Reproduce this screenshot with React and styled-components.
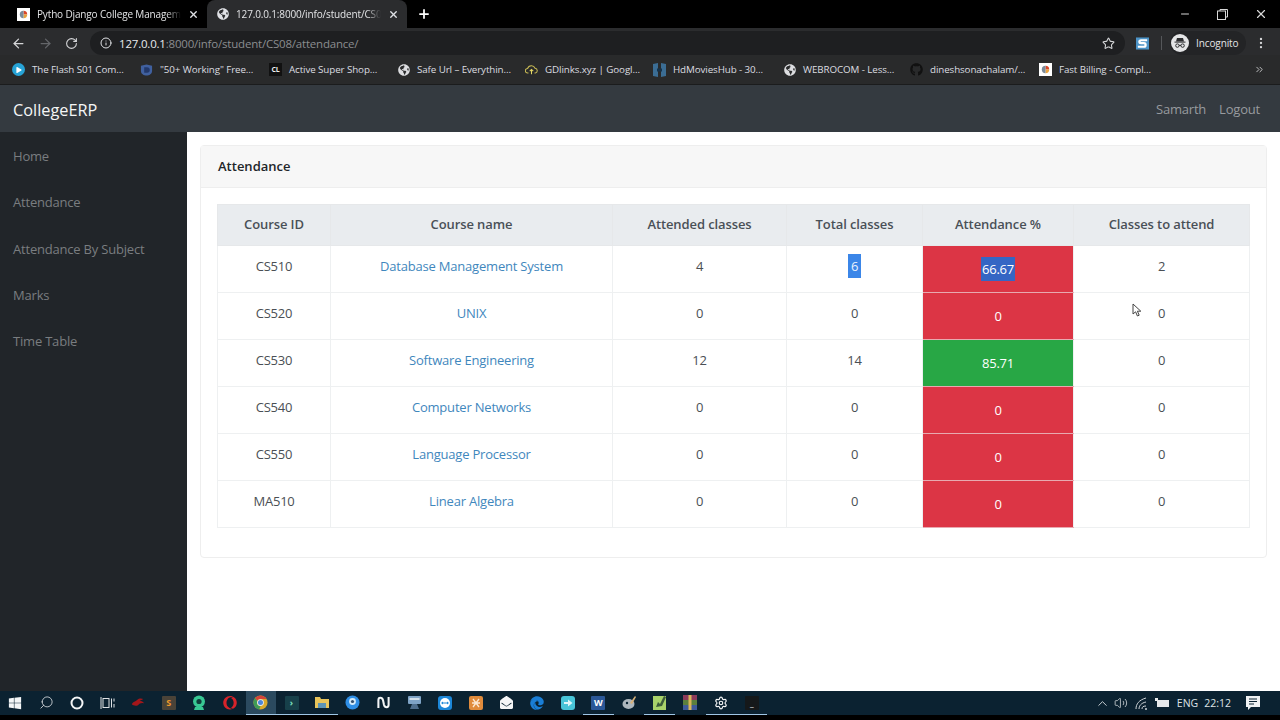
import styled, { createGlobalStyle } from "styled-components";
import {
  ArrowLeft,
  ArrowRight,
  ChevronUp,
  ChevronsRight,
  Info,
  Minus,
  MoreVertical,
  Plus,
  RotateCw,
  Search,
  Settings,
  Star,
  Volume2,
  X,
} from "lucide-react";
import {
  FaEdge,
  FaEnvelopeOpen,
  FaGithub,
  FaGlobeAmericas,
  FaOpera,
  FaPlay,
  FaWindows,
} from "react-icons/fa";

const GlobalStyle = createGlobalStyle`
  html, body {
    margin: 0;
    padding: 0;
    height: 720px;
    overflow: hidden;
    background: #000;
  }
  * {
    box-sizing: border-box;
  }
`;

const UI_FONT = `"Open Sans", "Noto Sans", sans-serif`;

const Page = styled.div`
  width: 1280px;
  height: 720px;
  display: flex;
  flex-direction: column;
  font-family: ${UI_FONT};
  background: #000;
`;

/* browser chrome */
const TabStrip = styled.div`
  height: 28px;
  flex: none;
  display: flex;
  align-items: flex-end;
  background: #000;
  color: #dfe1e5;
`;

const Tab = styled.div`
  width: ${(props) => props.$width}px;
  height: 28px;
  display: flex;
  align-items: center;
  gap: 7px;
  padding: 0 8px 0 ${(props) => props.$pad}px;
  background: ${(props) => (props.$active ? "#2b2c2e" : "transparent")};
  border-radius: 8px 8px 0 0;
`;

const TabTitle = styled.span`
  flex: 1;
  min-width: 0;
  font-size: 10px;
  letter-spacing: -0.15px;
  white-space: nowrap;
  color: #e3e4e6;
  -webkit-mask-image: linear-gradient(to right, #000 90%, transparent 100%);
  mask-image: linear-gradient(to right, #000 90%, transparent 100%);
`;

const NewTab = styled.div`
  width: 20px;
  height: 28px;
  margin-left: 7px;
  display: flex;
  align-items: center;
  justify-content: center;
  color: #fff;
`;

const WindowButtons = styled.div`
  margin-left: auto;
  height: 28px;
  display: flex;
  align-items: center;
  gap: 26px;
  padding-right: 12px;
  color: #d8d8d8;
`;

const Toolbar = styled.div`
  height: 27px;
  flex: none;
  display: flex;
  align-items: center;
  padding: 3px 0 0 11px;
  background: #2b2c2e;
  color: #d5d6d8;
`;

const NavIcons = styled.div`
  width: 79px;
  display: flex;
  align-items: center;
  gap: 12px;
`;

const Omnibox = styled.div`
  width: 1035px;
  height: 24px;
  display: flex;
  align-items: center;
  gap: 7px;
  padding: 0 10px;
  border-radius: 12px;
  background: #1e1f21;
`;

const Url = styled.span`
  flex: 1;
  font-size: 11.5px;
  letter-spacing: -0.2px;
  color: #8b8d90;
`;

const UrlHost = styled.span`
  color: #e8eaed;
`;

const ExtensionLogo = styled.svg`
  margin-left: 11px;
  flex: none;
`;

const Divider = styled.span`
  width: 1px;
  height: 14px;
  margin: 0 8px 0 12px;
  background: #55575a;
`;

const IncognitoChip = styled.div`
  width: 76px;
  height: 24px;
  display: flex;
  align-items: center;
  gap: 7px;
  padding-left: 1px;
  margin-right: 8px;
  font-size: 10px;
  letter-spacing: -0.1px;
  color: #e3e4e6;
  background: #232426;
  border-radius: 12px;
`;

const IncognitoBadge = styled.span`
  width: 18px;
  height: 18px;
  border-radius: 50%;
  background: #e4e5e6;
  display: flex;
  align-items: center;
  justify-content: center;
`;

const BookmarksBar = styled.div`
  height: 30px;
  flex: none;
  display: flex;
  align-items: center;
  padding-left: 12px;
  background: #292a2b;
  border-bottom: 1px solid #1b1c1d;
  color: #dcdde0;
`;

const Bookmark = styled.div`
  width: ${(props) => props.$width}px;
  display: flex;
  align-items: center;
  gap: 7px;
  font-size: 9.8px;
  letter-spacing: -0.1px;
  white-space: nowrap;
`;

const BookmarkIcon = styled.span`
  width: 13px;
  height: 13px;
  flex: none;
  display: flex;
  align-items: center;
  justify-content: center;
  font-size: 7px;
  font-weight: 700;
  border-radius: ${(props) => props.$radius || 0}px;
  background: ${(props) => props.$bg || "transparent"};
  color: ${(props) => props.$color || "#dcdde0"};
`;

const MoreBookmarks = styled.span`
  margin-left: auto;
  margin-right: 15px;
  display: flex;
  color: #c8c9cb;
`;

/* app */
const Navbar = styled.header`
  height: 47px;
  flex: none;
  display: flex;
  align-items: center;
  justify-content: space-between;
  padding: 0 20px 0 13px;
  background: #343a40;
`;

const Brand = styled.a`
  margin-top: 2px;
  font-size: 16.3px;
  color: #f5f6f6;
`;

const NavLinks = styled.nav`
  display: flex;
  gap: 13px;
`;

const NavLink = styled.a`
  font-size: 13px;
  letter-spacing: -0.2px;
  color: #989b9f;
`;

const Body = styled.div`
  flex: 1;
  min-height: 0;
  display: flex;
  background: #fff;
`;

const Sidebar = styled.aside`
  width: 187px;
  flex: none;
  display: flex;
  flex-direction: column;
  padding-top: 1px;
  background: #212529;
`;

const SideLink = styled.a`
  height: 46.3px;
  display: flex;
  align-items: center;
  padding-left: 13px;
  font-size: 13px;
  letter-spacing: -0.2px;
  color: #7a7d80;
`;

const Main = styled.main`
  flex: 1;
  min-width: 0;
  padding: 13px 13px 0;
`;

const Card = styled.section`
  height: 413px;
  border: 1px solid #eeeeee;
  border-radius: 4px;
`;

const CardHeader = styled.div`
  height: 42px;
  display: flex;
  align-items: center;
  padding: 0 0 1px 17px;
  font-size: 13px;
  font-weight: 600;
  color: #212529;
  background: #f7f7f7;
  border-bottom: 1px solid #eeeeee;
`;

const CardBody = styled.div`
  padding: 16px 16px 0;
`;

const Table = styled.table`
  width: 1032px;
  table-layout: fixed;
  border-collapse: collapse;
  font-size: 13px;
  letter-spacing: -0.2px;
  color: #4a4f54;
`;

const HeadCell = styled.th`
  height: 41px;
  padding: 0 0 2px;
  font-size: 13px;
  font-weight: 600;
  letter-spacing: -0.1px;
  text-align: center;
  color: #495057;
  background: #e9ecef;
  border: 1px solid #e6e8ea;
`;

const Cell = styled.td`
  height: 47px;
  padding: 0 0 6px;
  text-align: center;
  border: 1px solid #eef0f1;
  border-top-color: #e3e5e7;
`;

const PercentCell = styled.td`
  height: 47px;
  padding: 0;
  text-align: center;
  color: #fff;
  background: ${(props) => (props.$good ? "#28a745" : "#dc3545")};
  border-bottom: 1px solid #e8a9b0;
`;

const CourseLink = styled.a`
  color: #3f87bd;
`;

const Selected = styled.span`
  padding: ${(props) => (props.$dark ? "3px 1px" : "3px 3px")};
  color: ${(props) => (props.$dark ? "#fff" : "#eaf2fd")};
  background: ${(props) => (props.$dark ? "#3566c4" : "#3b86e8")};
`;

const Pointer = styled.svg`
  position: absolute;
  left: 1132px;
  top: 303px;
`;

/* windows taskbar */
const Taskbar = styled.footer`
  height: 24px;
  flex: none;
  display: flex;
  align-items: center;
  background: #0b2231;
  color: #e6e9eb;
`;

const TaskItem = styled.div`
  width: 30.7px;
  height: 24px;
  flex: none;
  display: flex;
  align-items: center;
  justify-content: center;
  background: ${(props) => (props.$focused ? "#2b4a5f" : "transparent")};
  border-bottom: 1px solid
    ${(props) => (props.$running ? "#9fc6e6" : "transparent")};
`;

const Tile = styled.span`
  width: 14px;
  height: 14px;
  display: flex;
  align-items: center;
  justify-content: center;
  font-size: 9px;
  font-weight: 700;
  color: ${(props) => props.$color || "#fff"};
  background: ${(props) => props.$bg || "transparent"};
  border-radius: ${(props) => props.$radius || 1}px;
`;

const SearchGlass = styled(Search)`
  transform: scaleX(-1);
`;

const Tray = styled.div`
  margin-left: auto;
  display: flex;
  align-items: center;
  padding-right: 20px;
  font-size: 10.5px;
  color: #dfe3e6;
`;

const TrayItem = styled.span`
  display: flex;
  align-items: center;
  margin-left: ${(props) => props.$gap}px;
`;

const Bottom = styled.div`
  height: 5px;
  flex: none;
  background: #000;
`;

const courses = [
  { id: "CS510", name: "Database Management System", attended: 4, total: 6, pct: "66.67", toAttend: 2 },
  { id: "CS520", name: "UNIX", attended: 0, total: 0, pct: "0", toAttend: 0 },
  { id: "CS530", name: "Software Engineering", attended: 12, total: 14, pct: "85.71", toAttend: 0, good: true },
  { id: "CS540", name: "Computer Networks", attended: 0, total: 0, pct: "0", toAttend: 0 },
  { id: "CS550", name: "Language Processor", attended: 0, total: 0, pct: "0", toAttend: 0 },
  { id: "MA510", name: "Linear Algebra", attended: 0, total: 0, pct: "0", toAttend: 0 },
];

const columns = [
  { title: "Course ID", width: 113 },
  { title: "Course name", width: 282 },
  { title: "Attended classes", width: 174 },
  { title: "Total classes", width: 136 },
  { title: "Attendance %", width: 151 },
  { title: "Classes to attend", width: 176 },
];

const sideLinks = ["Home", "Attendance", "Attendance By Subject", "Marks", "Time Table"];

function PieFavicon({ size = 13 }) {
  return (
    <svg width={size} height={size} viewBox="0 0 14 14">
      <rect width="14" height="14" fill="#fff" />
      <path d="M7 3a4 4 0 0 1 4 4H7z" fill="#d9472b" />
      <path d="M11 7a4 4 0 0 1-4 4V7z" fill="#e8a33d" />
      <path d="M7 11a4 4 0 0 1 0-8v4z" fill="#7b8a99" />
    </svg>
  );
}

function IncognitoIcon() {
  return (
    <svg width="14" height="14" viewBox="0 0 14 14" fill="#2b2c2e">
      <path d="M4 2h6l1 3.4H3z" />
      <rect x="1.5" y="5.6" width="11" height="1" />
      <circle cx="4.4" cy="9.6" r="1.7" fill="none" stroke="#2b2c2e" />
      <circle cx="9.6" cy="9.6" r="1.7" fill="none" stroke="#2b2c2e" />
      <path d="M6 9.4h2" stroke="#2b2c2e" />
    </svg>
  );
}

function CloudIcon() {
  return (
    <svg width="15" height="13" viewBox="0 0 15 13" fill="none" stroke="#c9bb55" strokeWidth="1.2">
      <path d="M4 10.5H3A2.6 2.6 0 0 1 3 5.3 4.6 4.6 0 0 1 11.6 5 2.8 2.8 0 0 1 12 10.5h-1" />
      <path d="M7.5 12V6.5M5.5 8.5l2-2 2 2" stroke="#e4d765" />
    </svg>
  );
}

function ShieldIcon() {
  return (
    <svg width="14" height="14" viewBox="0 0 14 14">
      <path d="M1 2.5 7 1l6 1.5V8c0 3-3 5-6 5s-6-2-6-5z" fill="#40609f" />
      <path d="M4.5 4h3a2.8 2.8 0 0 1 0 6h-3z" fill="#22386a" />
    </svg>
  );
}

function HdIcon() {
  return (
    <svg width="13" height="14" viewBox="0 0 13 14">
      <path d="M0 1l5-1v14l-5-1zM8 0l5 1v12l-5 1z" fill="#3b6d94" />
      <rect x="4" y="5.5" width="5" height="3" fill="#16324a" />
    </svg>
  );
}

function TaskView() {
  return (
    <svg width="15" height="14" viewBox="0 0 15 14" fill="none" stroke="#dfe3e6">
      <rect x="3" y="2.5" width="6" height="9" />
      <path d="M1 1v12M11.5 2.5v9M14 2.5v3M14 8v3.5" />
    </svg>
  );
}

function Folder() {
  return (
    <svg width="14" height="13" viewBox="0 0 14 13">
      <path d="M0 1h5l1 2h8v9H0z" fill="#e8c45a" />
      <rect x="3" y="7" width="8" height="5" fill="#5c93b5" />
    </svg>
  );
}

function ChromeIcon() {
  return (
    <svg width="15" height="15" viewBox="0 0 16 16">
      <circle cx="8" cy="8" r="7.5" fill="#d9a92b" />
      <path d="M8 .5a7.5 7.5 0 0 1 6.5 3.75H8A3.75 3.75 0 0 0 4.6 6.4L2.2 3.3A7.5 7.5 0 0 1 8 .5z" fill="#d5443a" />
      <path d="M2.2 3.3 4.6 6.4A3.75 3.75 0 0 0 8 11.75L6.6 15.4A7.5 7.5 0 0 1 2.2 3.3z" fill="#3f9b56" />
      <circle cx="8" cy="8" r="3.6" fill="#e9edf0" />
      <circle cx="8" cy="8" r="2.7" fill="#4c86d8" />
    </svg>
  );
}

function CarLogo() {
  return (
    <svg width="14" height="11" viewBox="0 0 16 12">
      <path d="M1 8c1-3 4-3 6-5 2-2 5-2 7-1-1 1-3 1-4 2 2 0 4 1 5 3-3-1-5 0-7 2-2 1-5 1-7-1z" fill="#a3161a" />
    </svg>
  );
}

function WhatsLogo() {
  return (
    <svg width="14" height="15" viewBox="0 0 14 15">
      <circle cx="7" cy="6.5" r="6" fill="#38c793" />
      <circle cx="7" cy="6.5" r="2.6" fill="#0f3d3a" />
      <path d="M3 12h8l1 3H2z" fill="#38c793" />
    </svg>
  );
}

function OrbLogo() {
  return (
    <svg width="15" height="15" viewBox="0 0 15 15">
      <circle cx="7.5" cy="7.5" r="7" fill="#2f8fe6" />
      <circle cx="7.5" cy="6.5" r="3.4" fill="#d5ecfb" />
      <circle cx="7.5" cy="6.5" r="1.6" fill="#35506e" />
    </svg>
  );
}

function WaveLogo() {
  return (
    <svg width="13" height="13" viewBox="0 0 14 14" fill="none" stroke="#f4f6f7" strokeWidth="2.2">
      <path d="M1.5 13V4.5c0-3.5 4-3.5 5 0l1 5c1 3.500 5 3.500 5 0V1" />
    </svg>
  );
}

function PcLogo() {
  return (
    <svg width="15" height="15" viewBox="0 0 15 15">
      <rect x="1" y="1" width="13" height="8" rx="1" fill="#7ea3c6" />
      <rect x="2.500" y="3" width="10" height="2" fill="#d3e0ea" />
      <path d="M5 9h5l2 5H3z" fill="#4d6d8c" />
    </svg>
  );
}

function TeamViewerLogo() {
  return (
    <svg width="14" height="14" viewBox="0 0 14 14">
      <rect width="14" height="14" rx="3" fill="#1c87d8" />
      <circle cx="7" cy="7" r="5" fill="#fff" />
      <path d="M3 7l2-1.500v1h4v-1L11 7 9 8.500v-1H5v1z" fill="#1c87d8" />
    </svg>
  );
}

function XamppLogo() {
  return (
    <svg width="14" height="14" viewBox="0 0 14 14" fill="none">
      <rect width="14" height="14" rx="2" fill="#e08b3c" />
      <path d="M4 3l6 8M10 3l-6 8M3 7h8" stroke="#fbe8d2" strokeWidth="1.3" />
    </svg>
  );
}

function ShareLogo() {
  return (
    <svg width="14" height="14" viewBox="0 0 14 14">
      <rect width="14" height="14" rx="3" fill="#48c4d8" />
      <path d="M3 6h4V3.500L11.500 7 7 10.500V8H3z" fill="#dff6fa" />
    </svg>
  );
}

function PaintLogo() {
  return (
    <svg width="15" height="15" viewBox="0 0 15 15">
      <ellipse cx="6.500" cy="9" rx="6" ry="5" fill="#aeb7bd" />
      <circle cx="5" cy="8" r="1.200" fill="#0b2231" />
      <path d="M8 8l5-7 1 1-4 7z" fill="#d9b27a" />
    </svg>
  );
}

function NotepadLogo() {
  return (
    <svg width="14" height="15" viewBox="0 0 14 15">
      <rect y="1" width="13" height="14" fill="#a8d26a" />
      <path d="M3 12l2-5 2 2 4-8 2 1-4 9z" fill="#3c5c3a" />
    </svg>
  );
}

function RarLogo() {
  return (
    <svg width="14" height="15" viewBox="0 0 14 15">
      <rect width="14" height="5" fill="#8c3a5a" />
      <rect y="5" width="14" height="5" fill="#5c7f3d" />
      <rect y="10" width="14" height="5" fill="#3f5a9a" />
      <rect x="5.500" width="3" height="15" fill="#d9b65a" />
    </svg>
  );
}

function ChatLogo() {
  return (
    <svg width="14" height="14" viewBox="0 0 14 14">
      <path d="M0 0h14v11H5l-3 3v-3H0z" fill="#f0f2f3" />
      <path d="M3 3h8M3 5.500h8M3 8h5" stroke="#0b2231" />
    </svg>
  );
}

function Battery() {
  return (
    <svg width="14" height="10" viewBox="0 0 14 10" fill="#e6e9eb">
      <rect x="2" y="2" width="12" height="7" />
      <rect x="0" y="0" width="3" height="3" />
    </svg>
  );
}

function WifiBars() {
  return (
    <svg width="13" height="13" viewBox="0 0 13 13" fill="none" stroke="#cfd4d8">
      <path d="M1 12C1 7 4 3 11 1M4 12c0-3 2-6 7-7M7 12c0-2 1-3 4-3" />
      <circle cx="11" cy="12" r="1" fill="#cfd4d8" stroke="none" />
    </svg>
  );
}

const taskIcons = [
  { key: "car", node: <CarLogo /> },
  { key: "sublime", node: <Tile $bg="#4a4338" $color="#f09a2a">S</Tile> },
  { key: "whatsapp", node: <WhatsLogo /> },
  { key: "opera", node: <FaOpera size={14} color="#d8232a" /> },
  { key: "chrome", node: <ChromeIcon />, focused: true, running: true },
  { key: "terminal", node: <Tile $bg="#17404a" $color="#7fe0c0">›</Tile>, running: true },
  { key: "folder", node: <Folder />, running: true },
  { key: "orb", node: <OrbLogo /> },
  { key: "wave", node: <WaveLogo /> },
  { key: "pc", node: <PcLogo /> },
  { key: "teamviewer", node: <TeamViewerLogo /> },
  { key: "xampp", node: <XamppLogo /> },
  { key: "mail", node: <FaEnvelopeOpen size={13} color="#f4f5f6" /> },
  { key: "edge", node: <FaEdge size={14} color="#1a7ed6" /> },
  { key: "share", node: <ShareLogo /> },
  { key: "word", node: <Tile $bg="#2b5797">W</Tile>, running: true },
  { key: "paint", node: <PaintLogo /> },
  { key: "notepad", node: <NotepadLogo />, running: true },
  { key: "rar", node: <RarLogo /> },
  { key: "gear", node: <Settings size={14} color="#f4f5f6" />, running: true },
  { key: "cmd", node: <Tile $bg="#15181a" $color="#cfd3d6">_</Tile>, running: true },
];

function App() {
  return (
    <Page>
      <GlobalStyle />
      <TabStrip>
        <Tab $width={207} $pad={17}>
          <PieFavicon />
          <TabTitle>Pytho Django College Managem</TabTitle>
          <X size={11} strokeWidth={3} />
        </Tab>
        <Tab $width={200} $active $pad={10}>
          <FaGlobeAmericas size={12} />
          <TabTitle>127.0.0.1:8000/info/student/CS08</TabTitle>
          <X size={11} strokeWidth={3} />
        </Tab>
        <NewTab>
          <Plus size={14} strokeWidth={3} />
        </NewTab>
        <WindowButtons>
          <Minus size={12} />
          <svg width="11" height="11" viewBox="0 0 11 11" fill="none" stroke="#d8d8d8">
            <rect x="0.5" y="2" width="8" height="8.5" />
            <path d="M3 2V.5h7.5V8H9" />
          </svg>
          <X size={14} />
        </WindowButtons>
      </TabStrip>

      <Toolbar>
        <NavIcons>
          <ArrowLeft size={15} />
          <ArrowRight size={15} color="#64666a" />
          <RotateCw size={13} />
        </NavIcons>
        <Omnibox>
          <Info size={12} color="#dfe1e5" />
          <Url>
            <UrlHost>127.0.0.1</UrlHost>:8000/info/student/CS08/attendance/
          </Url>
          <Star size={13} />
        </Omnibox>
        <ExtensionLogo width="13" height="13" viewBox="0 0 14 13">
          <rect width="14" height="13" fill="#4c93c7" />
          <path d="M12 3H5.5C3 3 3 6 5.5 6h3C11 6 11 10 8.5 10H2" fill="none" stroke="#fff" strokeWidth="2.4" />
        </ExtensionLogo>
        <Divider />
        <IncognitoChip>
          <IncognitoBadge>
            <IncognitoIcon />
          </IncognitoBadge>
          Incognito
        </IncognitoChip>
        <MoreVertical size={14} />
      </Toolbar>

      <BookmarksBar>
        <Bookmark $width={128}>
          <BookmarkIcon $bg="#27a3d6" $radius={7}><FaPlay size={6} color="#fff" /></BookmarkIcon>
          The Flash S01 Com...
        </Bookmark>
        <Bookmark $width={129}>
          <BookmarkIcon><ShieldIcon /></BookmarkIcon>
          "50+ Working" Free...
        </Bookmark>
        <Bookmark $width={128}>
          <BookmarkIcon $bg="#111" $color="#eee">CL</BookmarkIcon>
          Active Super Shop...
        </Bookmark>
        <Bookmark $width={128}>
          <BookmarkIcon><FaGlobeAmericas size={12} /></BookmarkIcon>
          Safe Url – Everythin...
        </Bookmark>
        <Bookmark $width={128}>
          <BookmarkIcon><CloudIcon /></BookmarkIcon>
          GDlinks.xyz | Googl...
        </Bookmark>
        <Bookmark $width={130}>
          <BookmarkIcon><HdIcon /></BookmarkIcon>
          HdMoviesHub - 30...
        </Bookmark>
        <Bookmark $width={127}>
          <BookmarkIcon><FaGlobeAmericas size={12} /></BookmarkIcon>
          WEBROCOM - Less...
        </Bookmark>
        <Bookmark $width={129}>
          <BookmarkIcon $color="#111"><FaGithub size={13} /></BookmarkIcon>
          dineshsonachalam/...
        </Bookmark>
        <Bookmark $width={140}>
          <PieFavicon />
          Fast Billing - Compl...
        </Bookmark>
        <MoreBookmarks>
          <ChevronsRight size={11} />
        </MoreBookmarks>
      </BookmarksBar>

      <Navbar>
        <Brand>CollegeERP</Brand>
        <NavLinks>
          <NavLink>Samarth</NavLink>
          <NavLink>Logout</NavLink>
        </NavLinks>
      </Navbar>

      <Body>
        <Sidebar>
          {sideLinks.map((link) => (
            <SideLink key={link}>{link}</SideLink>
          ))}
        </Sidebar>
        <Main>
          <Card>
            <CardHeader>Attendance</CardHeader>
            <CardBody>
              <Table>
                <colgroup>
                  {columns.map((col) => (
                    <col key={col.title} width={col.width} />
                  ))}
                </colgroup>
                <thead>
                  <tr>
                    {columns.map((col) => (
                      <HeadCell key={col.title}>{col.title}</HeadCell>
                    ))}
                  </tr>
                </thead>
                <tbody>
                  {courses.map((course, i) => (
                    <tr key={course.id}>
                      <Cell>{course.id}</Cell>
                      <Cell>
                        <CourseLink>{course.name}</CourseLink>
                      </Cell>
                      <Cell>{course.attended}</Cell>
                      <Cell>{i === 0 ? <Selected>{course.total}</Selected> : course.total}</Cell>
                      <PercentCell $good={course.good}>
                        {i === 0 ? <Selected $dark>{course.pct}</Selected> : course.pct}
                      </PercentCell>
                      <Cell>{course.toAttend}</Cell>
                    </tr>
                  ))}
                </tbody>
              </Table>
            </CardBody>
          </Card>
        </Main>
      </Body>

      <Taskbar>
        <TaskItem><FaWindows size={14} color="#f4f6f7" /></TaskItem>
        <TaskItem><SearchGlass size={15} strokeWidth={1.3} color="#dfe3e6" /></TaskItem>
        <TaskItem>
          <svg width="14" height="14" viewBox="0 0 14 14" fill="none" stroke="#f4f6f7" strokeWidth="2">
            <circle cx="7" cy="7" r="5.5" />
          </svg>
        </TaskItem>
        <TaskItem><TaskView /></TaskItem>
        {taskIcons.map((icon) => (
          <TaskItem key={icon.key} $focused={icon.focused} $running={icon.running}>
            {icon.node}
          </TaskItem>
        ))}
        <Tray>
          <TrayItem $gap={0}><ChevronUp size={15} strokeWidth={1.4} /></TrayItem>
          <TrayItem $gap={4}><Volume2 size={14} strokeWidth={1.3} /></TrayItem>
          <TrayItem $gap={7}><WifiBars /></TrayItem>
          <TrayItem $gap={7}><Battery /></TrayItem>
          <TrayItem $gap={8}>ENG</TrayItem>
          <TrayItem $gap={6}>22:12</TrayItem>
          <TrayItem $gap={15}><ChatLogo /></TrayItem>
        </Tray>
      </Taskbar>
      <Bottom />

      <Pointer width="10" height="14" viewBox="0 0 10 14" fill="#fff" stroke="#444">
        <path d="M1 1v10l2.6-2.2L5.4 13l1.8-.8-1.8-4h3.4z" />
      </Pointer>
    </Page>
  );
}

export default App;
